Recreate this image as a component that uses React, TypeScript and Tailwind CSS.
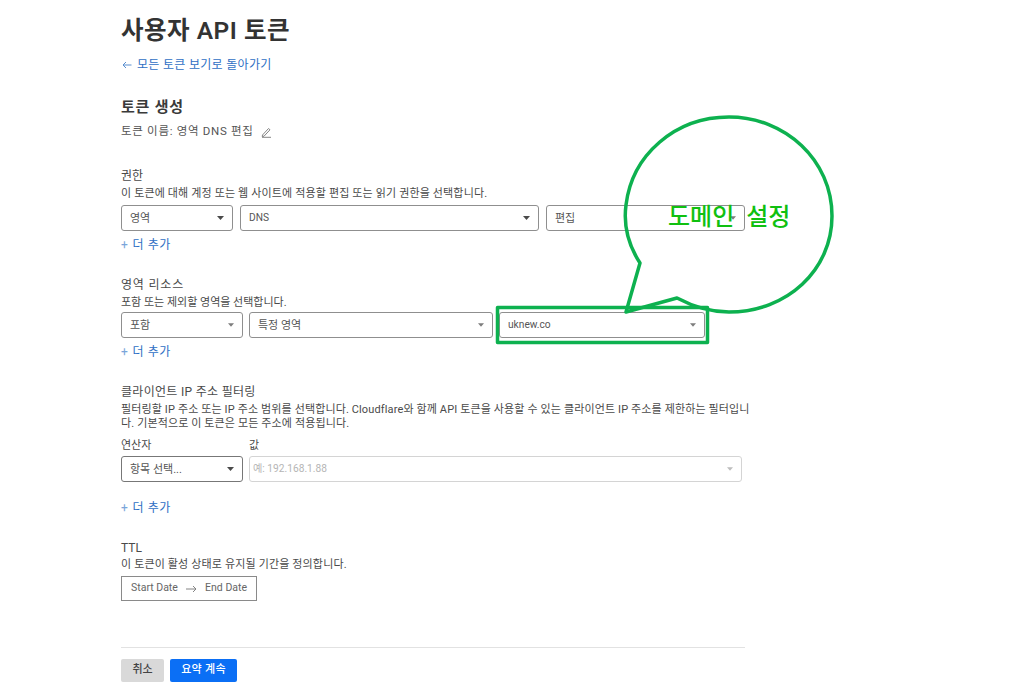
import React from "react";

const Caret = ({ light = false, small = false }: { light?: boolean; small?: boolean }) => (
  <svg width={small ? 6 : 7} height={4} viewBox="0 0 7 4" className="shrink-0">
    <path d="M0 0h7L3.5 4z" fill={light ? "#bdbdbd" : small ? "#7d7d7d" : "#4a4a4a"} />
  </svg>
);

const Select = ({
  w,
  label,
  disabled = false,
  small = false,
  strong = false,
  latin = false,
}: {
  w: string;
  label: string;
  disabled?: boolean;
  small?: boolean;
  strong?: boolean;
  latin?: boolean;
}) => (
  <div
    className={`${w} h-[26px] flex items-center justify-between rounded-[3px] border bg-white pr-[8px] ${
      disabled
        ? "border-[#d4d4d4] text-[#b5b5b5] pl-[3px]"
        : strong
          ? "border-[#777777] text-[#555555] pl-[8px]"
          : "border-[#8f8f8f] text-[#555555] pl-[8px]"
    }`}
  >
    <span className={`${latin ? "text-[10.2px]" : "text-[11px]"} leading-none`}>{label}</span>
    <Caret light={disabled} small={small} />
  </div>
);

const AddMore = () => (
  <div className="h-[14px] flex items-center text-[12px] leading-none text-[#2f6fc4] tracking-[0.6px]">
    <span className="mr-[4px] text-[#7aa5da]">+</span>더 추가
  </div>
);

export default function App() {
  return (
    <div
      className="relative w-[1024px] h-[700px] overflow-hidden bg-white text-[#3a3a3a]"
      style={{ fontFamily: 'Roboto, "Noto Sans CJK KR", sans-serif' }}
    >
      <div className="ml-[121px] w-[624px] flex flex-col">
        <h1 className="mt-[15px] h-[32px] text-[24.5px] leading-[32px] font-semibold text-[#333333] tracking-[0.5px]">
          사용자 API 토큰
        </h1>
        <div className="mt-[10px] h-[16px] flex items-center text-[12px] leading-none text-[#2f6fc4] tracking-[0.3px]">
          <svg width="10" height="8" viewBox="0 0 10 8" className="mr-[5px] ml-[1px]" fill="none" stroke="#5a8fd0" strokeWidth="1">
            <path d="M9.5 4H1M4 1L1 4l3 3" />
          </svg>
          모든 토큰 보기로 돌아가기
        </div>

        <h2 className="mt-[24px] h-[20px] text-[15px] leading-[20px] font-semibold text-[#3a3a3a] tracking-[0.8px]">토큰 생성</h2>
        <div className="mt-[8px] h-[14px] flex items-center text-[11.5px] leading-none text-[#555555] tracking-[0.7px]">
          토큰 이름: 영역 DNS 편집
          <svg width="11" height="11" viewBox="0 0 11 11" className="ml-[7px]" fill="none" stroke="#777777" strokeWidth="0.9">
            <path d="M1.5 8L7.5 1.5l1.5 1.3L3 9.2l-1.8.3zM1 10.3h9" />
          </svg>
        </div>

        <div className="mt-[30px] h-[14px] text-[12px] leading-[14px] text-[#4a4a4a]">권한</div>
        <div className="mt-[4px] h-[14px] text-[11px] leading-[14px] text-[#4a4a4a] tracking-[0.15px]">
          이 토큰에 대해 계정 또는 웹 사이트에 적용할 편집 또는 읽기 권한을 선택합니다.
        </div>
        <div className="mt-[4px] flex gap-[7px]">
          <Select w="w-[112px]" label="영역" />
          <Select w="w-[299px]" label="DNS" latin />
          <Select w="w-[199px]" label="편집" small />
        </div>
        <div className="mt-[7px]">
          <AddMore />
        </div>

        <div className="mt-[26px] h-[14px] text-[12px] leading-[14px] text-[#4a4a4a] tracking-[0.8px]">영역 리소스</div>
        <div className="mt-[4px] h-[14px] text-[11px] leading-[14px] text-[#4a4a4a]">포함 또는 제외할 영역을 선택합니다.</div>
        <div className="mt-[2px] flex gap-[6px]">
          <Select w="w-[122px]" label="포함" small />
          <Select w="w-[244px]" label="특정 영역" small />
          <Select w="w-[206px]" label="uknew.co" small latin />
        </div>
        <div className="mt-[7px]">
          <AddMore />
        </div>

        <div className="mt-[25px] h-[16px] text-[12px] leading-[16px] text-[#4a4a4a] tracking-[0.3px]">클라이언트 IP 주소 필터링</div>
        <div className="mt-[3px] text-[11px] leading-[14px] text-[#4a4a4a] tracking-[0.13px]">
          <div className="h-[14px] whitespace-nowrap">
            필터링할 IP 주소 또는 IP 주소 범위를 선택합니다. Cloudflare와 함께 API 토큰을 사용할 수 있는 클라이언트 IP 주소를 제한하는 필터입니
          </div>
          <div className="h-[14px]">다. 기본적으로 이 토큰은 모든 주소에 적용됩니다.</div>
        </div>
        <div className="mt-[8px] h-[14px] flex gap-[6px] text-[11px] leading-[14px] text-[#4a4a4a]">
          <div className="w-[122px]">연산자</div>
          <div>값</div>
        </div>
        <div className="mt-[3px] flex gap-[6px]">
          <Select w="w-[122px]" label="항목 선택..." strong />
          <Select w="w-[493px]" label="예: 192.168.1.88" disabled small latin />
        </div>
        <div className="mt-[19px]">
          <AddMore />
        </div>

        <div className="mt-[26px] h-[14px] text-[12px] leading-[14px] text-[#4a4a4a]">TTL</div>
        <div className="mt-[3px] h-[14px] text-[11px] leading-[14px] text-[#4a4a4a] tracking-[0.15px]">
          이 토큰이 활성 상태로 유지될 기간을 정의합니다.
        </div>
        <div className="mt-[4px] w-[136px] h-[25px] flex items-center justify-between border border-[#8a8a8a] px-[9px] text-[10.5px] leading-none text-[#666666]">
          <span>Start Date</span>
          <svg width="11" height="8" viewBox="0 0 11 8" fill="none" stroke="#777777" strokeWidth="0.9">
            <path d="M0 4h10M7 1l3 3-3 3" />
          </svg>
          <span>End Date</span>
        </div>

        <div className="mt-[46px] h-px bg-[#e2e2e2]" />
        <div className="mt-[11px] flex gap-[6px]">
          <button className="w-[43px] h-[23px] rounded-[2px] bg-[#d9d9d9] text-[11px] font-medium text-[#444444]">취소</button>
          <button className="w-[67px] h-[23px] rounded-[2px] bg-[#0b6ff5] text-[11px] font-medium text-white tracking-[0.3px]">요약 계속</button>
        </div>
      </div>

      {/* annotation overlay */}
      <svg width="1024" height="700" className="absolute left-0 top-0 pointer-events-none" fill="none" stroke="#0db14f">
        <path
          strokeWidth="3.5"
          strokeLinejoin="round"
          d="M640 263 C625 240 624 220 626 205 C632 155 675 117 729 117 C785 117 832 160 832 216 C832 270 787 312 729 312 C708 312 692 306 677 298 L626 312 Z"
        />
        <rect x="497.5" y="307.5" width="210" height="35" strokeWidth="3.5" strokeLinejoin="round" />
      </svg>
      <div className="absolute left-[668px] top-[202px] text-[24px] leading-[30px] font-medium text-[#10c010] whitespace-nowrap [word-spacing:6px]">
        도메인 설정
      </div>
    </div>
  );
}
